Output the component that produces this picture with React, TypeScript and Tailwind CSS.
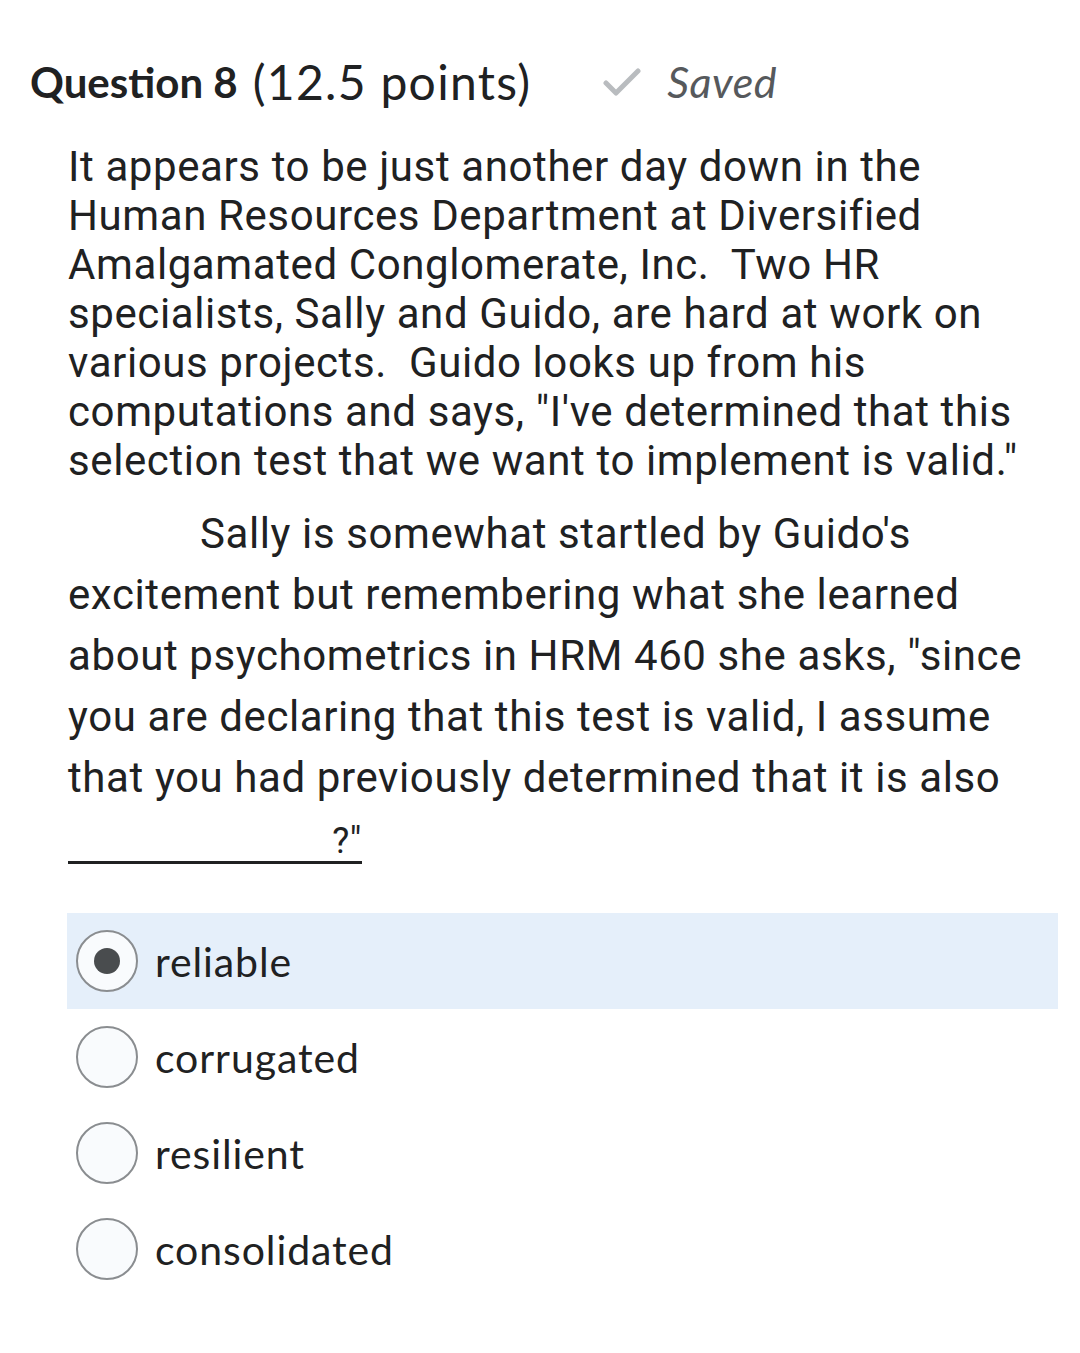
import type { ReactNode } from 'react';

const OPTIONS = [
  { label: 'reliable', checked: true },
  { label: 'corrugated', checked: false },
  { label: 'resilient', checked: false },
  { label: 'consolidated', checked: false },
];

function Radio({ checked }: { checked: boolean }) {
  return (
    <span className="flex h-[62px] w-[62px] shrink-0 items-center justify-center rounded-full border-2 border-[#8a8d90] bg-[#f9fbfd]">
      {checked && <span className="h-[26px] w-[26px] rounded-full bg-[#494c4e]" />}
    </span>
  );
}

function Line({ children }: { children: ReactNode }) {
  return <span className="block whitespace-pre">{children}</span>;
}

export default function App() {
  return (
    <div className="min-h-[1353px] w-[1080px] bg-white text-[#202122]">
      {/* header */}
      <div className="flex items-center pl-[30px] pt-[52px] font-['Lato','Noto_Sans',sans-serif]">
        <h2 className="text-[42px] font-bold leading-[60px] tracking-[0px]">Question 8</h2>
        <span className="ml-[15px] text-[48px] leading-[60px] tracking-[1.3px]">(12.5 points)</span>
        <span className="ml-[72px] flex items-center gap-[26px]">
          <svg width="38" height="30" viewBox="0 0 38 30" fill="none">
            <path
              d="M3 16 L13 26 L35 4"
              stroke="#b9bcbf"
              strokeWidth="5"
              strokeLinecap="round"
              strokeLinejoin="round"
            />
          </svg>
          <span className="text-[43px] italic leading-[60px] tracking-[0.5px] text-[#56595c]">Saved</span>
        </span>
      </div>

      {/* question text */}
      <div className="pl-[68px] pt-[30px] font-['Roboto','Noto_Sans',sans-serif] text-[42px] tracking-[0.6px]">
        <p className="leading-[49px]">
          <Line>It appears to be just another day down in the</Line>
          <Line>Human Resources Department at Diversified</Line>
          <Line>Amalgamated Conglomerate, Inc.  Two HR</Line>
          <Line>specialists, Sally and Guido, are hard at work on</Line>
          <Line>various projects.  Guido looks up from his</Line>
          <Line>computations and says, "I've determined that this</Line>
          <Line>selection test that we want to implement is valid."</Line>
        </p>
        <p className="mt-[18px] leading-[61px]">
          <Line>
            <span className="inline-block w-[132px]" />
            Sally is somewhat startled by Guido's
          </Line>
          <Line>excitement but remembering what she learned</Line>
          <Line>about psychometrics in HRM 460 she asks, "since</Line>
          <Line>you are declaring that this test is valid, I assume</Line>
          <Line>that you had previously determined that it is also</Line>
          <Line>
            <span className="inline-block w-[294px] border-b-[3px] border-[#202122] text-right text-[36px] leading-[40px]">
              ?"
            </span>
          </Line>
        </p>
      </div>

      {/* options */}
      <div className="ml-[67px] mt-[44px] w-[991px] font-['Lato','Noto_Sans',sans-serif]">
        {OPTIONS.map((o) => (
          <label
            key={o.label}
            className={`flex h-[96px] items-center gap-[17px] pl-[9px] ${o.checked ? 'bg-[#e5effa]' : ''}`}
          >
            <Radio checked={o.checked} />
            <span className="text-[41px] leading-none tracking-[0.9px]">{o.label}</span>
          </label>
        ))}
      </div>
    </div>
  );
}
